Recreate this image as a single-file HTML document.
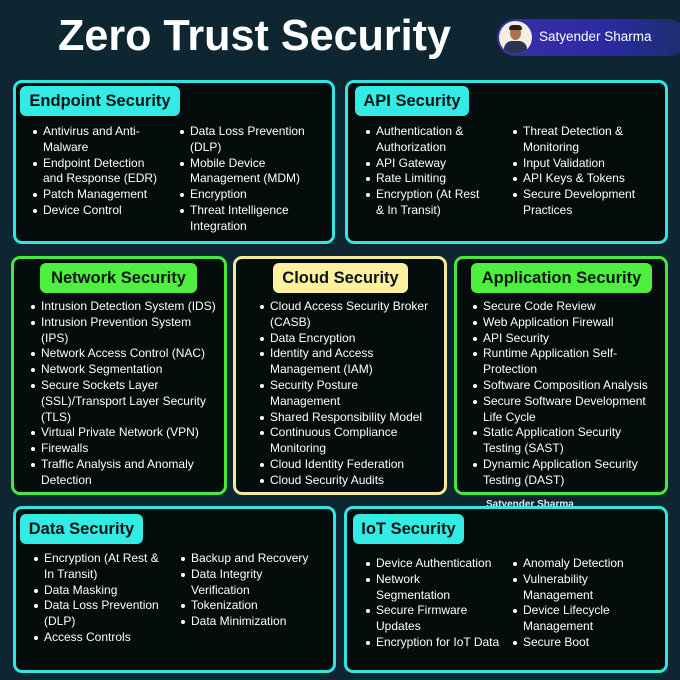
<!DOCTYPE html>
<html><head><meta charset="utf-8"><style>
*{margin:0;padding:0;box-sizing:border-box}
body{width:680px;height:680px;background:#0d2631;position:relative;overflow:hidden;font-family:"Liberation Sans",sans-serif}
.title{position:absolute;left:58px;top:11px;font-size:44px;font-weight:bold;color:#fff;white-space:nowrap;transform:scaleX(0.98);transform-origin:left top}
.badge{position:absolute;left:497px;top:19px;width:190px;height:37px;border-radius:19px;background:linear-gradient(90deg,#3a2fa8,#2a2aa0 60%,#1a2f6a);}
.av{position:absolute;left:2px;top:2px;width:33px;height:33px;border-radius:50%;background:#f4eee4;overflow:hidden}
.av .h{position:absolute;left:11px;top:5px;width:11px;height:14px;border-radius:50%;background:#a8734e}
.av .hair{position:absolute;left:10px;top:4px;width:13px;height:5px;border-radius:6px 6px 2px 2px;background:#222}
.av .b{position:absolute;left:5px;top:20px;width:23px;height:16px;border-radius:8px 8px 0 0;background:#2a3550}
.badge span{position:absolute;left:42px;top:10px;color:#fff;font-size:13.5px;white-space:nowrap}
.box{position:absolute;background:#050c0c;border:3px solid #31e6e0;border-radius:9px}
.g{border-color:#45e83d}.y{border-color:#f3e79a}
.chip{position:absolute;height:30px;border-radius:6px;background:#33ebe5;color:#0a1414;font-weight:bold;font-size:16.5px;line-height:30px;text-align:center;white-space:nowrap}
.chip.g{background:#4ef03e}.chip.y{background:#fdf1a0}
.col{position:absolute;color:#fff;font-size:12px;line-height:15.8px;white-space:nowrap}
.col div{position:relative;padding-left:10px}
.col div:before{content:"";position:absolute;left:0;top:6px;width:4px;height:4px;border-radius:50%;background:#fff}
.wm{position:absolute;left:486px;top:499px;color:#e8e8e8;font-size:10px;font-weight:bold;white-space:nowrap}
</style></head><body>
<div class="title">Zero Trust Security</div>
<div class="badge"><div class="av"><div class="b"></div><div class="h"></div><div class="hair"></div></div><span>Satyender Sharma</span></div>

<div class="box" style="left:13px;top:80px;width:322px;height:164px"></div>
<div class="chip" style="left:20px;top:86px;width:160px">Endpoint Security</div>
<div class="col" style="left:33px;top:124px">
<div>Antivirus and Anti-<br>Malware</div><div>Endpoint Detection<br>and Response (EDR)</div><div>Patch Management</div><div>Device Control</div></div>
<div class="col" style="left:180px;top:124px">
<div>Data Loss Prevention<br>(DLP)</div><div>Mobile Device<br>Management (MDM)</div><div>Encryption</div><div>Threat Intelligence<br>Integration</div></div>

<div class="box" style="left:345px;top:80px;width:323px;height:164px"></div>
<div class="chip" style="left:355px;top:86px;width:114px">API Security</div>
<div class="col" style="left:366px;top:124px">
<div>Authentication &amp;<br>Authorization</div><div>API Gateway</div><div>Rate Limiting</div><div>Encryption (At Rest<br>&amp; In Transit)</div></div>
<div class="col" style="left:513px;top:124px">
<div>Threat Detection &amp;<br>Monitoring</div><div>Input Validation</div><div>API Keys &amp; Tokens</div><div>Secure Development<br>Practices</div></div>

<div class="box g" style="left:11px;top:256px;width:216px;height:239px"></div>
<div class="chip g" style="left:40px;top:263px;width:157px">Network Security</div>
<div class="col" style="left:31px;top:299px">
<div>Intrusion Detection System (IDS)</div><div>Intrusion Prevention System<br>(IPS)</div><div>Network Access Control (NAC)</div><div>Network Segmentation</div><div>Secure Sockets Layer<br>(SSL)/Transport Layer Security<br>(TLS)</div><div>Virtual Private Network (VPN)</div><div>Firewalls</div><div>Traffic Analysis and Anomaly<br>Detection</div></div>

<div class="box y" style="left:233px;top:256px;width:214px;height:239px"></div>
<div class="chip y" style="left:273px;top:263px;width:135px">Cloud Security</div>
<div class="col" style="left:260px;top:299px">
<div>Cloud Access Security Broker<br>(CASB)</div><div>Data Encryption</div><div>Identity and Access<br>Management (IAM)</div><div>Security Posture<br>Management</div><div>Shared Responsibility Model</div><div>Continuous Compliance<br>Monitoring</div><div>Cloud Identity Federation</div><div>Cloud Security Audits</div></div>

<div class="box g" style="left:454px;top:256px;width:214px;height:239px"></div>
<div class="chip g" style="left:471px;top:263px;width:181px">Application Security</div>
<div class="col" style="left:473px;top:299px">
<div>Secure Code Review</div><div>Web Application Firewall</div><div>API Security</div><div>Runtime Application Self-<br>Protection</div><div>Software Composition Analysis</div><div>Secure Software Development<br>Life Cycle</div><div>Static Application Security<br>Testing (SAST)</div><div>Dynamic Application Security<br>Testing (DAST)</div></div>

<div class="wm">Satyender Sharma</div>

<div class="box" style="left:13px;top:506px;width:323px;height:167px"></div>
<div class="chip" style="left:20px;top:514px;width:123px">Data Security</div>
<div class="col" style="left:34px;top:551px">
<div>Encryption (At Rest &amp;<br>In Transit)</div><div>Data Masking</div><div>Data Loss Prevention<br>(DLP)</div><div>Access Controls</div></div>
<div class="col" style="left:181px;top:551px">
<div>Backup and Recovery</div><div>Data Integrity<br>Verification</div><div>Tokenization</div><div>Data Minimization</div></div>

<div class="box" style="left:344px;top:506px;width:324px;height:167px"></div>
<div class="chip" style="left:353px;top:514px;width:111px">IoT Security</div>
<div class="col" style="left:366px;top:556px">
<div>Device Authentication</div><div>Network<br>Segmentation</div><div>Secure Firmware<br>Updates</div><div>Encryption for IoT Data</div></div>
<div class="col" style="left:513px;top:556px">
<div>Anomaly Detection</div><div>Vulnerability<br>Management</div><div>Device Lifecycle<br>Management</div><div>Secure Boot</div></div>
</body></html>
